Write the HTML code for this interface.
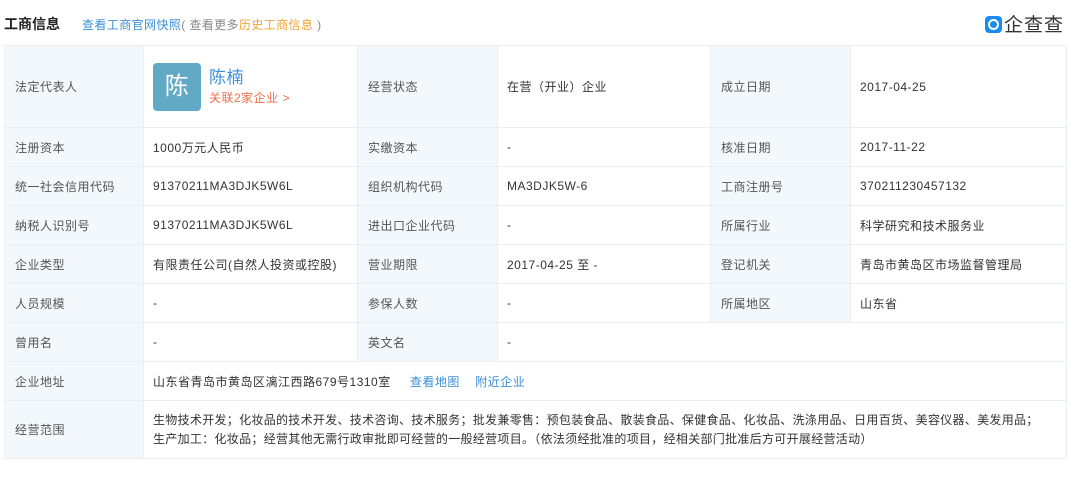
<!DOCTYPE html>
<html><head><meta charset="utf-8"><style>
body{margin:0;background:#fff;font-family:"Liberation Sans","Noto Sans CJK SC",sans-serif;color:#333;width:1080px;height:501px;overflow:hidden;position:relative}
.hd{position:absolute;left:4px;top:14px;font-size:14px;font-weight:bold;color:#222}
.sub{position:absolute;left:82px;top:16px;font-size:12px;color:#888;letter-spacing:0.4px}
.sub a{color:#3b8fd9}.sub .o{color:#f2a032}
.logo{position:absolute;left:985px;top:10px;font-size:19px;color:#333;letter-spacing:1px}
.logo i{display:inline-block;width:17px;height:17px;background:#1a8cf0;border-radius:4px;vertical-align:-2px;margin-right:2px;position:relative}
.logo i:after{content:"";position:absolute;left:3px;top:3px;width:7px;height:7px;border:2px solid #fff;border-radius:50%}
table{position:absolute;left:4px;top:45px;width:1063px;border-collapse:collapse;font-size:12px;table-layout:fixed}
td{border:1px solid #eaeef1;padding:0 0 0 9px;height:38px;letter-spacing:0.5px}
td.l{background:#f2f8fb;color:#555;padding-left:10px}
a{color:#3b8fd9;text-decoration:none}
.av{display:inline-block;width:48px;height:48px;background:#62a9c6;border-radius:4px;color:#fff;font-size:24px;text-align:center;line-height:48px;vertical-align:middle}
.nm{display:inline-block;vertical-align:middle;margin-left:8px}
.nm b{font-weight:normal;color:#3b8fd9;font-size:17px;display:block;line-height:22px}
.nm span{color:#f0704a;font-size:12px}
</style></head><body>
<div class="hd">工商信息</div>
<div class="sub"><a>查看工商官网快照</a>( 查看更多<span class="o">历史工商信息</span> )</div>
<div class="logo"><i></i>企查查</div>
<table>
<colgroup><col style="width:139px"><col style="width:214px"><col style="width:140px"><col style="width:213px"><col style="width:140px"><col></colgroup>
<tr style="height:82px"><td class="l">法定代表人</td><td><span class="av">陈</span><span class="nm"><b>陈楠</b><span>关联2家企业 &gt;</span></span></td><td class="l">经营状态</td><td>在营（开业）企业</td><td class="l">成立日期</td><td>2017-04-25</td></tr>
<tr style="height:39px"><td class="l">注册资本</td><td>1000万元人民币</td><td class="l">实缴资本</td><td>-</td><td class="l">核准日期</td><td>2017-11-22</td></tr>
<tr style="height:39px"><td class="l">统一社会信用代码</td><td>91370211MA3DJK5W6L</td><td class="l">组织机构代码</td><td>MA3DJK5W-6</td><td class="l">工商注册号</td><td>370211230457132</td></tr>
<tr style="height:39px"><td class="l">纳税人识别号</td><td>91370211MA3DJK5W6L</td><td class="l">进出口企业代码</td><td>-</td><td class="l">所属行业</td><td>科学研究和技术服务业</td></tr>
<tr style="height:39px"><td class="l">企业类型</td><td>有限责任公司(自然人投资或控股)</td><td class="l">营业期限</td><td>2017-04-25 至 -</td><td class="l">登记机关</td><td>青岛市黄岛区市场监督管理局</td></tr>
<tr style="height:38px"><td class="l">人员规模</td><td>-</td><td class="l">参保人数</td><td>-</td><td class="l">所属地区</td><td>山东省</td></tr>
<tr style="height:38px"><td class="l">曾用名</td><td>-</td><td class="l">英文名</td><td colspan="3">-</td></tr>
<tr style="height:38px"><td class="l">企业地址</td><td colspan="5">山东省青岛市黄岛区漓江西路679号1310室 &nbsp; &nbsp; <a>查看地图</a> &nbsp; &nbsp;<a>附近企业</a></td></tr>
<tr style="height:58px"><td class="l">经营范围</td><td colspan="5" style="line-height:19px;letter-spacing:0.3px;white-space:nowrap">生物技术开发；化妆品的技术开发、技术咨询、技术服务；批发兼零售：预包装食品、散装食品、保健食品、化妆品、洗涤用品、日用百货、美容仪器、美发用品；<br>生产加工：化妆品；经营其他无需行政审批即可经营的一般经营项目。（依法须经批准的项目，经相关部门批准后方可开展经营活动）</td></tr>
</table>
</body></html>
